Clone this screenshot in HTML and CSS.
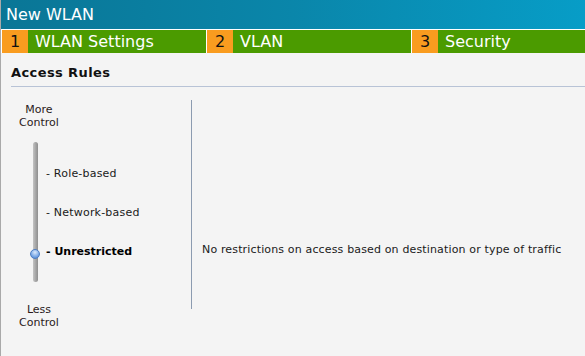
FILE: index.html
```html
<!DOCTYPE html>
<html>
<head>
<meta charset="utf-8">
<link rel="stylesheet" href="styles.css">
</head>
<body>
<div class="page">
  <div class="header">New WLAN</div>
  <div class="tabs">
    <div class="tab"><span class="num">1</span><span class="label">WLAN Settings</span></div>
    <div class="tab"><span class="num">2</span><span class="label">VLAN</span></div>
    <div class="tab last"><span class="num">3</span><span class="label">Security</span></div>
  </div>
  <div class="content">
    <div class="section-title">Access Rules</div>
    <div class="rules">
      <div class="slider-col">
        <div class="end-label">More<br>Control</div>
        <div class="slider">
          <div class="track"><div class="knob"></div></div>
          <div class="options">
            <div class="opt">- Role-based</div>
            <div class="opt">- Network-based</div>
            <div class="opt sel">- Unrestricted</div>
          </div>
        </div>
        <div class="end-label less">Less<br>Control</div>
      </div>
      <div class="desc-col">
        <div class="desc">No restrictions on access based on destination or type of traffic</div>
      </div>
    </div>
  </div>
</div>
</body>
</html>
```
FILE: styles.css
```css
html, body {
  margin: 0;
  padding: 0;
}
body {
  background: #f4f4f4;
  font-family: "DejaVu Sans", Verdana, sans-serif;
  color: #1a1a1a;
}
.page {
  width: 585px;
  height: 356px;
  overflow: hidden;
  background: #f4f4f4;
  border-left: 1px solid #a9a9a9;
  box-sizing: border-box;
}
.header {
  height: 29px;
  line-height: 30px;
  padding-left: 5px;
  color: #fff;
  font-size: 16px;
  background: linear-gradient(to right, #0a7696, #0a86aa 50%, #079dc7);
}
.tabs {
  display: flex;
  border-top: 1px solid #fff;
  height: 23px;
  background: #fff;
  padding-left: 1px;
  gap: 1px;
}
.tab {
  display: flex;
  width: 204px;
  background: #4b9b00;
}
.tab.last {
  flex: 1;
}
.num {
  width: 26px;
  background: #f99c1f;
  color: #111;
  font-size: 16px;
  line-height: 24px;
  text-align: center;
}
.label {
  color: #fff;
  font-size: 16px;
  line-height: 24px;
  padding-left: 7px;
}
.content {
  padding: 12px 0 0 10px;
}
.section-title {
  font-weight: bold;
  font-size: 13px;
  letter-spacing: 0.4px;
  line-height: 16px;
  color: #111;
  padding-bottom: 5px;
  border-bottom: 1px solid #b8c3d6;
}
.rules {
  display: flex;
  margin-left: -10px;
}
.slider-col {
  width: 190px;
  flex: none;
  padding-top: 16px;
}
.end-label {
  width: 76px;
  text-align: center;
  font-size: 11px;
  line-height: 13px;
  color: #2a1a1a;
}
.slider {
  display: flex;
  margin-top: 13px;
}
.track {
  position: relative;
  margin-left: 32px;
  width: 5px;
  height: 140px;
  border-radius: 3px;
  background: linear-gradient(to right, #c4c4c4, #a8a8a8 50%, #8e8e8e);
}
.knob {
  position: absolute;
  left: -3px;
  top: 107px;
  width: 10px;
  height: 10px;
  border-radius: 50%;
  box-sizing: border-box;
  border: 1px solid #4d7ec4;
  background: radial-gradient(circle at 50% 30%, #dbe9fb, #7aa8e6 60%, #4a7cc8);
}
.options {
  margin-left: 8px;
  padding-top: 25px;
  display: flex;
  flex-direction: column;
  gap: 25px;
}
.opt {
  font-size: 11px;
  letter-spacing: 0.2px;
  line-height: 14px;
  white-space: nowrap;
  color: #1a1a1a;
}
.opt.sel {
  font-weight: bold;
  letter-spacing: 0;
  color: #000;
}
.less {
  margin-top: 21px;
}
.desc-col {
  margin-top: 13px;
  height: 209px;
  border-left: 1px solid #8c9bb0;
  padding-left: 10px;
}
.desc {
  padding-top: 143px;
  font-size: 11px;
  letter-spacing: 0.15px;
  line-height: 14px;
  white-space: nowrap;
}
```
